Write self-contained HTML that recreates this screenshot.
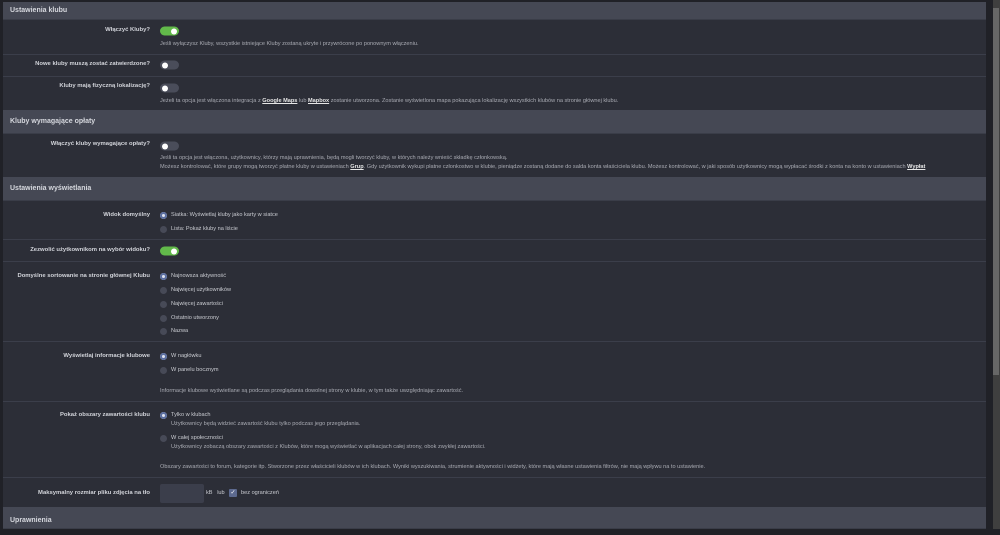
<!DOCTYPE html>
<html><head><meta charset="utf-8"><style>
*{margin:0;padding:0;box-sizing:border-box}
body{width:1000px;height:529px;overflow:hidden;background:#202127;font-family:"Liberation Sans",sans-serif;position:relative}
#panel{position:absolute;left:3px;top:2px;width:983px;height:527px;background:#2c2e37}
.h{position:absolute;left:3px;width:983px;background:#454854;color:#d6d8de;font-size:7px;font-weight:bold;padding-left:7px;border-bottom:1px solid #3a3d48}
.sep{position:absolute;left:3px;width:983px;height:1px;background:#3b3e4a}
.l{position:absolute;right:850px;color:#d2d4da;font-size:5.9px;font-weight:bold;white-space:nowrap;transform:translateY(-50%)}
.t{position:absolute;left:160px;color:#a9abb3;font-size:5.6px;white-space:nowrap;transform:translateY(-50%)}
.t u{color:#e6e6e6;font-weight:bold}
.r{position:absolute;left:160px;color:#c9cbd1;font-size:5.6px;white-space:nowrap;transform:translateY(-50%)}
.r:before{content:"";position:absolute;left:0;top:50%;margin-top:-3.5px;width:7px;height:7px;border-radius:50%;background:#474a57}
.r.on:before{background:#dfe3ef;box-shadow:inset 0 0 0 2px #5a6ea0}
.r span{padding-left:11px}
.tg{position:absolute;left:160px;width:19px;height:9px;border-radius:5px;background:#4a4d5a;transform:translateY(-50%)}
.tg:after{content:"";position:absolute;left:2px;top:1.5px;width:6px;height:6px;border-radius:50%;background:#fff}
.tg.on{background:#62b94a}
.tg.on:after{left:11px}
</style></head><body>
<div id="panel"></div>
<div style="position:absolute;left:993px;top:0;width:7px;height:529px;background:#3f3f3f"></div>
<div style="position:absolute;left:993px;top:8px;width:6px;height:367px;background:#676767"></div>

<div class="h" style="top:2px;height:18px;line-height:17px">Ustawienia klubu</div>
<div class="l" style="top:30px">Włączyć Kluby?</div><div class="tg on" style="top:31px"></div>
<div class="t" style="top:44px">Jeśli wyłączysz Kluby, wszystkie istniejące Kluby zostaną ukryte i przywrócone po ponownym włączeniu.</div>
<div class="sep" style="top:54px"></div>
<div class="l" style="top:64px">Nowe kluby muszą zostać zatwierdzone?</div><div class="tg" style="top:65px"></div>
<div class="sep" style="top:76px"></div>
<div class="l" style="top:86px">Kluby mają fizyczną lokalizację?</div><div class="tg" style="top:88px"></div>
<div class="t" style="top:101px">Jeżeli ta opcja jest włączona integracja z <u>Google Maps</u> lub <u>Mapbox</u> zostanie utworzona. Zostanie wyświetlona mapa pokazująca lokalizację wszystkich klubów na stronie głównej klubu.</div>

<div class="h" style="top:110px;height:24px;line-height:24px">Kluby wymagające opłaty</div>
<div class="l" style="top:144px">Włączyć kluby wymagające opłaty?</div><div class="tg" style="top:146px"></div>
<div class="t" style="top:158px">Jeśli ta opcja jest włączona, użytkownicy, którzy mają uprawnienia, będą mogli tworzyć kluby, w których należy wnieść składkę członkowską.</div>
<div class="t" style="top:167px">Możesz kontrolować, które grupy mogą tworzyć płatne kluby w ustawieniach <u>Grup</u>. Gdy użytkownik wykupi płatne członkostwo w klubie, pieniądze zostaną dodane do salda konta właściciela klubu. Możesz kontrolować, w jaki sposób użytkownicy mogą wypłacać środki z konta na konto w ustawieniach <u>Wypłat</u></div>

<div class="h" style="top:177px;height:24px;line-height:24px">Ustawienia wyświetlania</div>
<div class="l" style="top:215px">Widok domyślny</div>
<div class="r on" style="top:215px"><span>Siatka: Wyświetlaj kluby jako karty w siatce</span></div>
<div class="r" style="top:229px"><span>Lista: Pokaż kluby na liście</span></div>
<div class="sep" style="top:239px"></div>
<div class="l" style="top:250px">Zezwolić użytkownikom na wybór widoku?</div><div class="tg on" style="top:251px"></div>
<div class="sep" style="top:261px"></div>
<div class="l" style="top:276px">Domyślne sortowanie na stronie głównej Klubu</div>
<div class="r on" style="top:276px"><span>Najnowsza aktywność</span></div>
<div class="r" style="top:290px"><span>Najwięcej użytkowników</span></div>
<div class="r" style="top:304px"><span>Najwięcej zawartości</span></div>
<div class="r" style="top:318px"><span>Ostatnio utworzony</span></div>
<div class="r" style="top:331px"><span>Nazwa</span></div>
<div class="sep" style="top:341px"></div>
<div class="l" style="top:356px">Wyświetlaj informacje klubowe</div>
<div class="r on" style="top:356px"><span>W nagłówku</span></div>
<div class="r" style="top:370px"><span>W panelu bocznym</span></div>
<div class="t" style="top:391px">Informacje klubowe wyświetlane są podczas przeglądania dowolnej strony w klubie, w tym także uwzględniając zawartość.</div>
<div class="sep" style="top:401px"></div>
<div class="l" style="top:415px">Pokaż obszary zawartości klubu</div>
<div class="r on" style="top:415px"><span>Tylko w klubach</span></div>
<div class="t" style="top:424px;left:171px">Użytkownicy będą widzieć zawartość klubu tylko podczas jego przeglądania.</div>
<div class="r" style="top:438px"><span>W całej społeczności</span></div>
<div class="t" style="top:447px;left:171px">Użytkownicy zobaczą obszary zawartości z Klubów, które mogą wyświetlać w aplikacjach całej strony, obok zwykłej zawartości.</div>
<div class="t" style="top:467px">Obszary zawartości to forum, kategorie itp. Stworzone przez właścicieli klubów w ich klubach. Wyniki wyszukiwania, strumienie aktywności i widżety, które mają własne ustawienia filtrów, nie mają wpływu na to ustawienie.</div>
<div class="sep" style="top:477px"></div>
<div class="l" style="top:493px">Maksymalny rozmiar pliku zdjęcia na tło</div>
<div style="position:absolute;left:160px;top:484px;width:44px;height:19px;background:#3b3e4b;border-radius:2px"></div>
<div class="t" style="top:493px;left:206px;color:#c9cbd1">kB &nbsp; lub</div>
<div style="position:absolute;left:229px;top:489px;width:8px;height:8px;background:#5d6a8f;border-radius:1px;color:#fff;font-size:6px;line-height:8px;text-align:center">✓</div>
<div class="t" style="top:493px;left:241px;color:#c9cbd1">bez ograniczeń</div>
<div class="h" style="top:507px;height:22px;line-height:28px">Uprawnienia</div>
</body></html>
